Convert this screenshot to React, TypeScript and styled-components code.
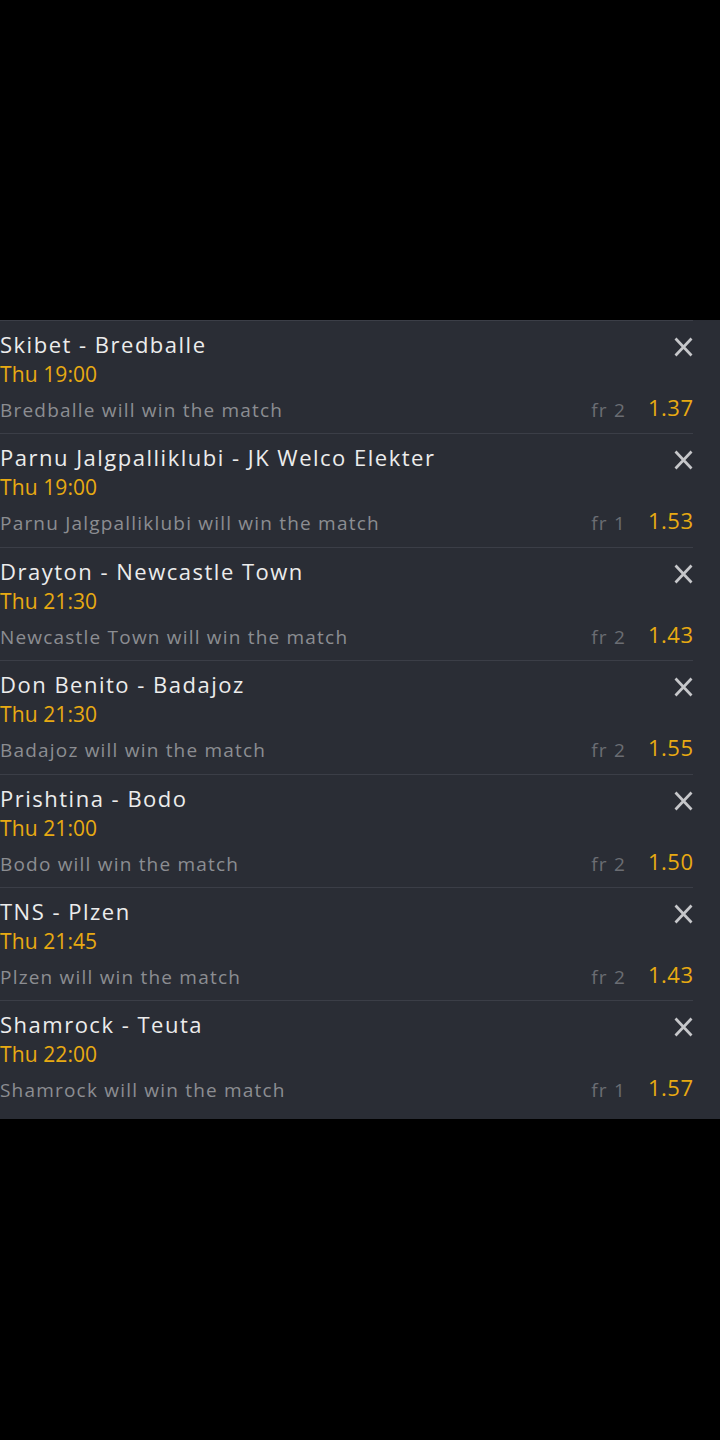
import React from "react";
import styled, { createGlobalStyle } from "styled-components";

const Global = createGlobalStyle`
  html, body { margin: 0; padding: 0; background: #000; }
  body { font-family: "Open Sans", "Liberation Sans", sans-serif; }
  #root { min-height: 1440px; }
`;

const Page = styled.div`
  width: 720px;
  height: 1440px;
  background: #000;
  display: flex;
  flex-direction: column;
  padding-top: 320px;
  box-sizing: border-box;
`;

const Panel = styled.div`
  background: #2a2d35;
  padding: 0 27px 5px 0;
  display: flex;
  flex-direction: column;
`;

const Row = styled.div`
  height: 113.4px;
  box-sizing: border-box;
  border-top: 1px solid #3b3e47;
  padding-top: 8px;
  display: flex;
  flex-direction: column;
`;

const Header = styled.div`
  display: flex;
  justify-content: space-between;
  align-items: flex-start;
`;

const Title = styled.div`
  font-size: 22px;
  line-height: 30px;
  color: #ececec;
  letter-spacing: 1.5px;
  white-space: nowrap;
`;

const Time = styled.div`
  font-size: 21px;
  line-height: 30px;
  color: #e8aa12;
  letter-spacing: 0.1px;
`;

const Footer = styled.div`
  margin-top: 4px;
  display: flex;
  justify-content: space-between;
  align-items: baseline;
  line-height: 30px;
`;

const Selection = styled.div`
  font-size: 19px;
  color: #8c8d92;
  letter-spacing: 1.2px;
  white-space: nowrap;
`;

const OddsBox = styled.div`
  display: flex;
  align-items: baseline;
  gap: 22px;
`;

const Fr = styled.span`
  font-size: 19px;
  color: #6b6d73;
  letter-spacing: 1.2px;
`;

const Odds = styled.span`
  font-size: 22px;
  color: #e8aa12;
  letter-spacing: 0.5px;
  margin-right: -0.5px;
  position: relative;
  top: -1px;
`;

const Close = styled.button`
  background: none;
  border: none;
  padding: 0;
  margin-top: 8px;
  width: 19px;
  height: 20px;
  display: flex;
  align-items: center;
  justify-content: center;
`;

const XIcon = () => (
  <svg width="19" height="20" viewBox="0 0 19 20">
    <path d="M1.5 1.5 L17.5 18.5 M17.5 1.5 L1.5 18.5" stroke="#c6c7ca" strokeWidth="2.7" />
  </svg>
);

const bets = [
  { title: "Skibet - Bredballe", time: "Thu 19:00", sel: "Bredballe will win the match", fr: "fr 2", odds: "1.37" },
  { title: "Parnu Jalgpalliklubi - JK Welco Elekter", time: "Thu 19:00", sel: "Parnu Jalgpalliklubi will win the match", fr: "fr 1", odds: "1.53" },
  { title: "Drayton - Newcastle Town", time: "Thu 21:30", sel: "Newcastle Town will win the match", fr: "fr 2", odds: "1.43" },
  { title: "Don Benito - Badajoz", time: "Thu 21:30", sel: "Badajoz will win the match", fr: "fr 2", odds: "1.55" },
  { title: "Prishtina - Bodo", time: "Thu 21:00", sel: "Bodo will win the match", fr: "fr 2", odds: "1.50" },
  { title: "TNS - Plzen", time: "Thu 21:45", sel: "Plzen will win the match", fr: "fr 2", odds: "1.43" },
  { title: "Shamrock - Teuta", time: "Thu 22:00", sel: "Shamrock will win the match", fr: "fr 1", odds: "1.57" },
];

export default function App() {
  return (
    <>
      <Global />
      <Page>
        <Panel>
          {bets.map((b, i) => (
            <Row key={i}>
              <Header>
                <Title>{b.title}</Title>
                <Close aria-label="remove">
                  <XIcon />
                </Close>
              </Header>
              <Time>{b.time}</Time>
              <Footer>
                <Selection>{b.sel}</Selection>
                <OddsBox>
                  <Fr>{b.fr}</Fr>
                  <Odds>{b.odds}</Odds>
                </OddsBox>
              </Footer>
            </Row>
          ))}
        </Panel>
      </Page>
    </>
  );
}
